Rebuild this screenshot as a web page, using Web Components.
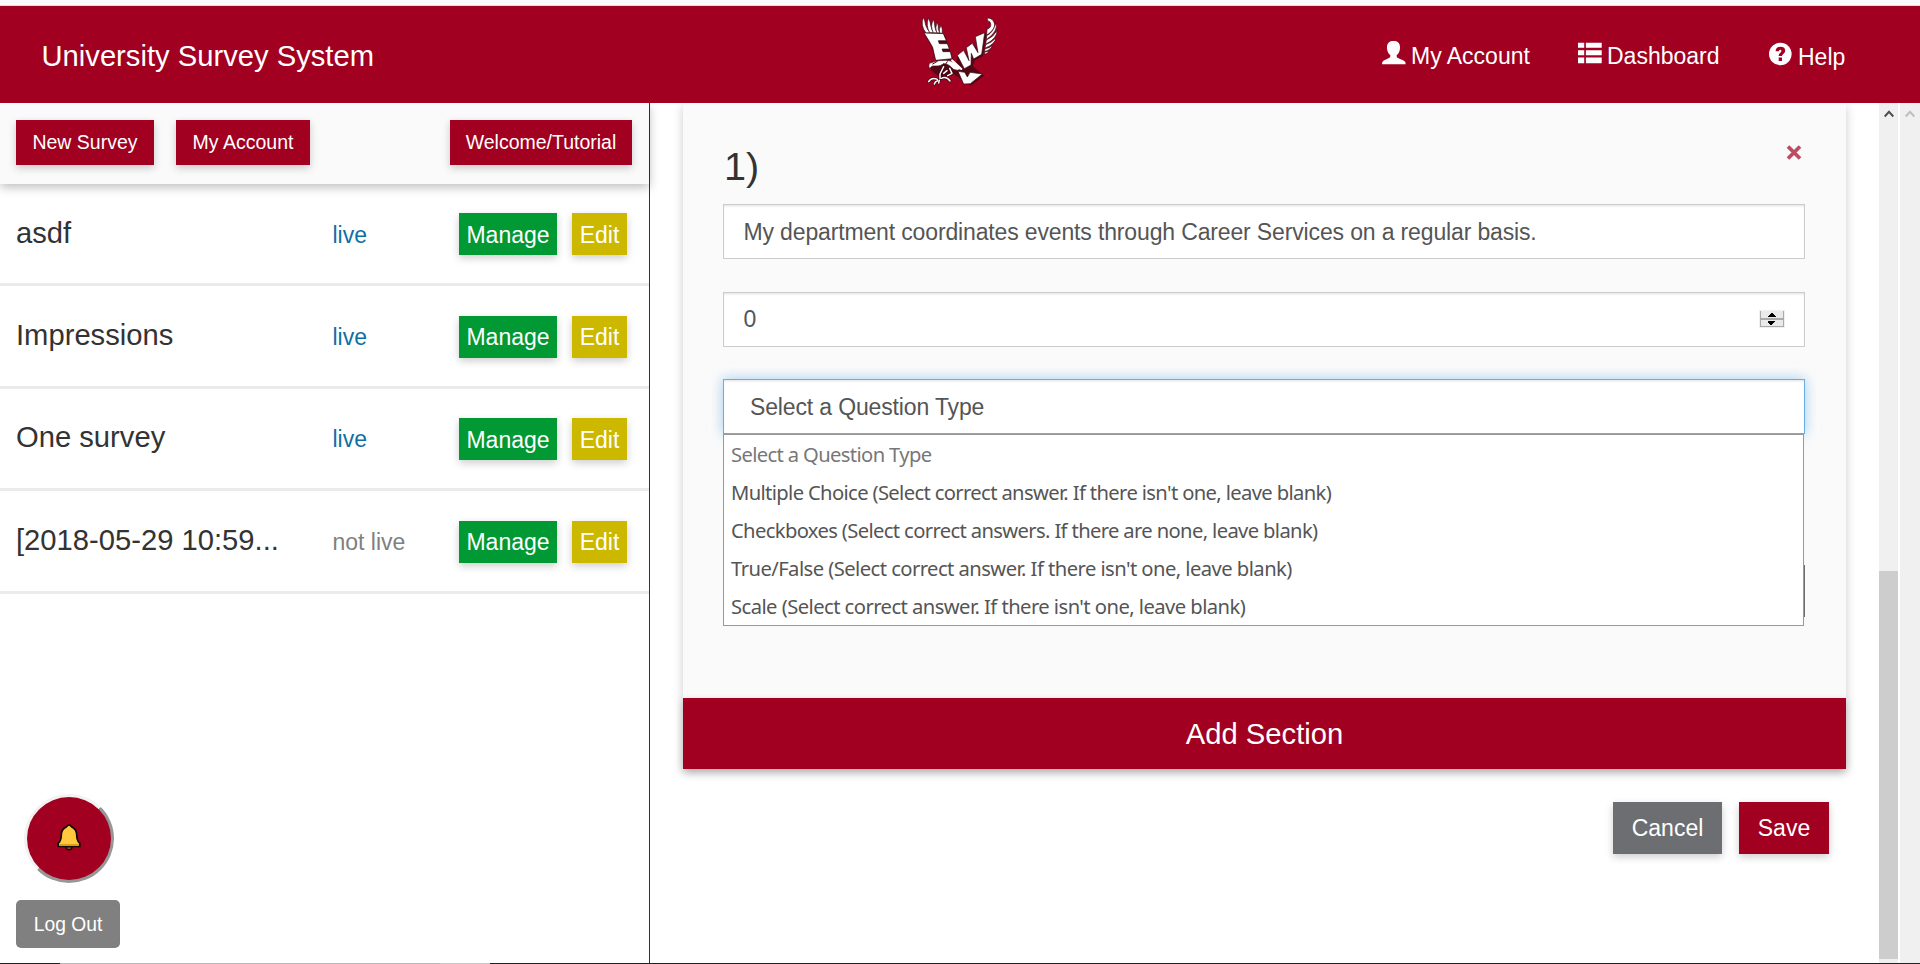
<!DOCTYPE html>
<html lang="en">
<head>
<meta charset="utf-8">
<title>University Survey System</title>
<style>
html,body{margin:0;height:100%;overflow:hidden;background:#fff}
body{font-family:"Liberation Sans",Arial,sans-serif;color:#333}
</style>
</head>
<body>
<survey-app></survey-app>
<script>
const define = (name, html, setup) => customElements.define(name, class extends HTMLElement {
  constructor() {
    super();
    const t = document.createElement('template');
    t.innerHTML = html;
    this.attachShadow({ mode: 'open' }).append(t.content.cloneNode(true));
  }
  connectedCallback() { if (setup) setup(this, this.shadowRoot); }
});

define('eagle-logo', `
<style>:host{display:block;width:120px;height:97px}svg{display:block;width:120px;height:97px}</style>
<svg viewBox="0 18 360 291" aria-label="Eagle logo">
  <g transform="translate(3 5)" fill="#3c0710" stroke="#3c0710" stroke-width="4" opacity=".75">
    <path d="M72 98L130 101L155 176L107 181L92 128Z"/>
    <path d="M172 164L191 151L207 178L199 143L217 130L232 152L226 110L254 98L244 162L220 175L213 193L246 222L209 250L160 216Z"/>
    <path d="M88 190Q110 177 140 181Q175 185 184 207L118 226L92 204Z"/>
  </g>
  <g fill="#fff" stroke="#310b12" stroke-width="2" stroke-linejoin="round">
    <path d="M78 99Q60 77 70 51Q75 62 77 75Q83 92 91 98Z"/>
    <path d="M89 98Q76 76 86 53Q91 66 93 80Q96 93 102 98Z"/>
    <path d="M100 98Q89 77 101 58Q104 71 105 82Q107 93 112 99Z"/>
    <path d="M110 98Q104 83 112 66Q116 78 115 88Q117 95 120 99Z"/>
    <path d="M119 99Q115 86 124 76Q128 88 127 100Z"/>
    <path d="M72 99L130 101L139 122L115 122L118 131L142 131L148 147L126 147L129 155L151 155L156 176L107 181L98 142L86 121Z"/>
    <path d="M254 98L245 163L221 177L214 160L213 195L193 206L172 166L191 151L207 182L199 143L217 130L234 158L226 110Z"/>
    <path d="M261 88Q278 81 270 66Q259 62 262 54Q279 53 284 72Q286 88 260 106Z"/>
    <path d="M260 107Q281 97 287 69Q297 92 259 119Z"/>
    <path d="M259 120Q281 111 291 91Q293 114 257 133Z"/>
    <path d="M257 134Q276 127 288 114Q285 132 255 145Z"/>
    <path d="M255 146Q270 144 277 135Q273 150 254 155Z"/>
    <path d="M254 156Q262 157 267 151Q264 163 253 162Z"/>
    <path d="M174 214L194 217L202 231L210 217L247 222L211 251L191 252Z"/>
    <path d="M88 190Q112 179 137 181Q166 181 184 207Q173 214 160 208Q146 190 129 191Q124 199 104 198Q93 196 89 208Q84 197 88 190Z"/>
  </g>
  <g fill="none" stroke-linecap="round" stroke-linejoin="round">
    <path d="M156 181L184 207" stroke="#fff" stroke-width="6"/>
    <path d="M112 184L98 192M142 185L132 199L148 211L175 217" stroke="#4d0715" stroke-width="3"/>
    <path d="M131 200L120 222L120 235M141 212L131 220M149 205L156 220L143 227M124 235Q139 228 150 243M112 238Q94 230 86 245M113 242Q105 244 103 252M118 241L116 249" stroke="#32060f" stroke-width="8"/>
    <path d="M131 200L120 222L120 235M141 212L131 220M149 205L156 220L143 227M124 235Q139 228 150 243M112 238Q94 230 86 245M113 242Q105 244 103 252M118 241L116 249" stroke="#fff" stroke-width="4.5"/>
  </g>
</svg>`);

const glyphs = {
  user: '<path d="M8.3 14.2C5.6 12.2 4.8 8.800 5 5.800C5.200 2 7.500 0 11.500 0S17.800 2 18 5.800C18.200 8.800 17.400 12.200 14.700 14.200C14.500 15.700 15 16.700 16.500 17.300L21.500 19.500Q24 20.700 23.700 23.300H0Q-.3 20.700 1.800 19.500L6.500 17.300C8 16.700 8.500 15.700 8.300 14.200Z"/>',
  list: '<path d="M0 1.800h6.200v5H0zM7.900 1.800h15.800v5H7.900zM0 9.300h6.200v5H0zM7.900 9.300h15.800v5H7.900zM0 16.400h6.200v5.800H0zM7.900 16.400h15.800v5.800H7.900z"/>',
  help: '<circle cx="11.300" cy="12" r="11.300"/><path d="M6.600 9.200Q6.800 4.800 11.500 4.800Q16.200 4.900 16.200 8.700Q16.200 10.500 14.300 11.900Q13 12.800 13 14H9.700Q9.600 12.100 11.300 10.800Q12.600 9.800 12.400 8.800Q12.200 7.700 11.200 7.800Q9.900 7.900 9.900 9.200ZM9.700 15.600H13V18.900H9.700Z" fill="#a10021"/>'
};
define('nav-link', `
<style>:host{display:flex;align-items:flex-start;color:#fff;font-size:23px;line-height:28px;white-space:nowrap}
svg{width:24px;height:24px;margin:.5px 5px 0 0;fill:currentColor;overflow:visible;flex:none}
span{padding-top:1px}</style>
<svg viewBox="0 0 24 24"></svg><span><slot></slot></span>`,
(el, root) => { root.querySelector('svg').innerHTML = glyphs[el.getAttribute('icon')]; });

define('top-bar', `
<style>
:host{display:block;border-top:5px solid #fafafa;box-sizing:border-box;height:103px}
header{border-top:1px solid #dedede;background:#a10021;height:97px;display:flex;align-items:center;color:#fff}
h1{font:400 29.2px/36px "Liberation Sans",Arial,sans-serif;margin:0;padding:2px 0 0 41.500px;width:858.500px;box-sizing:content-box}
nav{margin-left:362px;display:grid;grid-template-columns:196px 191px 90px;padding-top:2px}
nav-link:last-child{padding-top:1px}
</style>
<header><h1>University Survey System</h1><eagle-logo></eagle-logo>
<nav><nav-link icon="user">My Account</nav-link><nav-link icon="list">Dashboard</nav-link><nav-link icon="help">Help</nav-link></nav></header>`);

define('push-button', `
<style>
:host{display:block;--bg:#a10021}
:host([tone=green]){--bg:#009933}:host([tone=gold]){--bg:#cdb800}:host([tone=slate]){--bg:#6d6e71}:host([tone=gray]){--bg:#808080}
button{display:flex;align-items:center;justify-content:center;width:100%;height:100%;border:0;padding:0;margin:0;background:var(--bg);color:#fff;font:inherit;white-space:nowrap;box-shadow:0 3px 8px rgba(0,0,0,.2)}
span{padding-top:var(--drop,0)}
:host([tone=gray]) button{border-radius:5px;box-shadow:none}
</style><button><span><slot></slot></span></button>`);

define('survey-row', `
<style>
:host{display:flex;align-items:center;height:99.400px;border-bottom:3px solid #ebebeb;padding-left:16px;background:#fff}
.name{width:316.500px;font-size:29.2px;line-height:34px;padding-bottom:2px;color:#333}
.state{width:126.500px;font-size:23px;color:#0e6fa5;padding-top:3px}
:host([off]) .state{color:#808080}
push-button{height:42px;font-size:23px;margin-top:1.400px;--drop:2px}
.m{width:98px;margin-right:15px}.e{width:55px}
</style>
<span class="name"><slot></slot></span><span class="state"></span>
<push-button class="m" tone="green">Manage</push-button><push-button class="e" tone="gold">Edit</push-button>`,
(el, root) => { root.querySelector('.state').textContent = el.hasAttribute('off') ? 'not live' : 'live'; });

define('alert-bell', `
<style>:host{display:block;width:84px;height:83px;border:3px solid;border-color:#f2f2f2 #979797 #979797 #f2f2f2;border-radius:50%;background:#a10021}
svg{display:block;width:24px;height:27px;margin:27px 30px}</style>
<svg viewBox="0 0 24 27"><path d="M12 1C13.500 1 13.900 2.400 14.800 2.900C18.400 4.500 19.600 7.500 19.700 11C19.800 15 20.500 17.500 22.800 19.200V22.500H1.200V19.200C3.500 17.500 4.200 15 4.300 11C4.400 7.500 5.600 4.500 9.200 2.900C10.100 2.400 10.500 1 12 1Z" fill="#ffc83d" stroke="#120a05" stroke-width="1.700"/><path d="M2.200 20h19.600v1.700H2.200z" fill="#e69a12"/><path d="M8.800 22.900Q9.200 25.800 12 25.800T15.200 22.900Z" fill="#8c5a1c" stroke="#120a05" stroke-width="1.300"/></svg>`);

define('side-bar', `
<style>
:host{display:flex;flex-direction:column;box-sizing:border-box;width:650px;height:861px;border-right:1px solid #333;background:#fff}
.tools{display:flex;height:64px;padding:17px 17px 0 16px;background:#fafafa;box-shadow:0 3px 10px rgba(0,0,0,.27);position:relative}
.tools push-button{height:45px;font-size:19.5px}
.foot{margin-top:auto;padding:0 0 16px 16px}
alert-bell{margin:0 0 17px 8px}
.out{width:104px;height:48px;font-size:19.300px;--drop:2px}
</style>
<div class="tools"><push-button style="width:138px;margin-right:22px">New Survey</push-button><push-button style="width:134px">My Account</push-button><push-button style="width:182px;margin-left:auto">Welcome/Tutorial</push-button></div>
<survey-row>asdf</survey-row><survey-row>Impressions</survey-row><survey-row>One survey</survey-row><survey-row off>[2018-05-29 10:59...</survey-row>
<div class="foot"><alert-bell></alert-bell><push-button class="out" tone="gray">Log Out</push-button></div>`);

define('form-field', `
<style>
:host{display:flex;align-items:center;justify-content:space-between;box-sizing:border-box;height:55px;border:1px solid #ccc;background:#fff;padding:0 20px 0 19.500px;color:#555;font-size:23px;letter-spacing:-.145px;line-height:28px;white-space:nowrap;box-shadow:inset 0 1.500px 1.500px rgba(0,0,0,.09)}
:host([focused]){border-color:#66afe9;padding-left:26px;box-shadow:inset 0 1.500px 1.500px rgba(0,0,0,.09),0 0 12px rgba(102,175,233,.6)}
svg{display:none;width:26px;height:18px;margin:-2px -1px 0 0}
:host([stepper]) span{margin-top:-2px}
:host([stepper]) svg{display:block}
</style><span><slot></slot></span>
<svg viewBox="0 0 26 18" shape-rendering="crispEdges"><path d="M0 0h26v18H0z" fill="#f0f0f0"/><path d="M2 1h22v7H2zM2 10h22v6H2z" fill="#eaeaea"/><path d="M1 1h1v16H1zM24 1h1v16h-1zM1 8h24v2H1zM1 16h24v1H1z" fill="#aaa"/><path d="M12 3h2v1h1v1h1v1h1v1H9V6h1V5h1V4h1zM9 11h7v1h-1v1h-1v1h-1v1h-2v-1h-1v-1H9z"/></svg>`);

define('option-list', `
<style>
:host{display:block;box-sizing:border-box;height:192px;border:1px solid #999;background:#fff;font:20.200px/38px "Noto Sans",Tahoma,sans-serif;letter-spacing:-.64px;color:#555;padding-left:7px;white-space:nowrap}
::slotted(div){height:38px}
::slotted([muted]){color:#777}
::slotted([loose]){letter-spacing:-.55px}
</style><slot></slot>`);

define('question-card', `
<style>
:host{display:flex;flex-direction:column;box-sizing:border-box;width:1163px;height:666px;background:#fafafa;box-shadow:0 3px 10px rgba(0,0,0,.2)}
.body{padding:0 41px 0 40px;height:595px;position:relative}
.top{display:flex;justify-content:space-between;height:101px}
h2{margin:0;font:400 39.500px/46px "Liberation Sans",Arial,sans-serif;padding:40px 0 0 1px}
.x{width:16px;height:15px;margin:42px 3px 0 0}
form-field{margin-bottom:33px}
form-field.s{margin-bottom:32px}
option-list{position:absolute;left:40px;right:42px;top:331px}
.slot{position:absolute;right:41px;top:462px;width:10px;height:52px;background:#6d6e71}
push-button{height:71px;font-size:29.200px;--drop:2px}
</style>
<div class="body">
 <div class="top"><h2>1)</h2><svg class="x" viewBox="0 0 16 15"><path d="M2 1.500L14 13.500M14 1.500L2 13.500" stroke="#bd4c63" stroke-width="3.700" fill="none"/></svg></div>
 <form-field>My department coordinates events through Career Services on a regular basis.</form-field>
 <form-field class="s" stepper>0</form-field>
 <form-field focused>Select a Question Type</form-field>
 <div class="slot"></div>
 <option-list><div muted>Select a Question Type</div><div>Multiple Choice (Select correct answer. If there isn't one, leave blank)</div><div>Checkboxes (Select correct answers. If there are none, leave blank)</div><div loose>True/False (Select correct answer. If there isn't one, leave blank)</div><div loose>Scale (Select correct answer. If there isn't one, leave blank)</div></option-list>
</div>
<push-button>Add Section</push-button>`);

define('scroll-track', `
<style>
:host{display:flex;flex-direction:column;align-items:center;height:860px;background:#f0f0f0;color:#505050}
:host([idle]){color:#bfbfbf}
svg{display:block;width:10px;height:8px;margin-top:7px;fill:none;stroke:currentColor;stroke-width:2}
i{display:none;width:100%;height:388px;background:#cdcdcd;margin-top:453px}
:host(:not([idle])) i{display:block}
</style><svg viewBox="0 0 10 8"><path d="M.7 6.500L5 1.800L9.300 6.500"/></svg><i></i>`);

define('survey-app', `
<style>
:host{display:block;width:1920px;height:964px;overflow:hidden;position:relative}
main{display:flex;height:861px;overflow:hidden}
.content{width:1229px;overflow:hidden;padding-left:33px;box-sizing:border-box}
.actions{display:flex;gap:17px;width:1163px;box-sizing:border-box;padding:33px 17px 0 0;justify-content:flex-end}
.actions push-button{height:52px;font-size:23px}
.edge{position:absolute;left:0;right:0;bottom:0;height:1px;background:linear-gradient(90deg,#222 60px,#b9b9b9 60px,#b9b9b9 440px,#c6c6c6 440px,#c6c6c6 490px,#222 490px)}
</style>
<top-bar></top-bar>
<main><side-bar></side-bar>
<section class="content"><question-card></question-card>
<div class="actions"><push-button tone="slate" style="width:109px">Cancel</push-button><push-button style="width:90px">Save</push-button></div></section>
<scroll-track style="width:19px;margin-right:2px"></scroll-track><scroll-track idle style="width:20px"></scroll-track></main>
<div class="edge"></div>`);
</script>
</body>
</html>
